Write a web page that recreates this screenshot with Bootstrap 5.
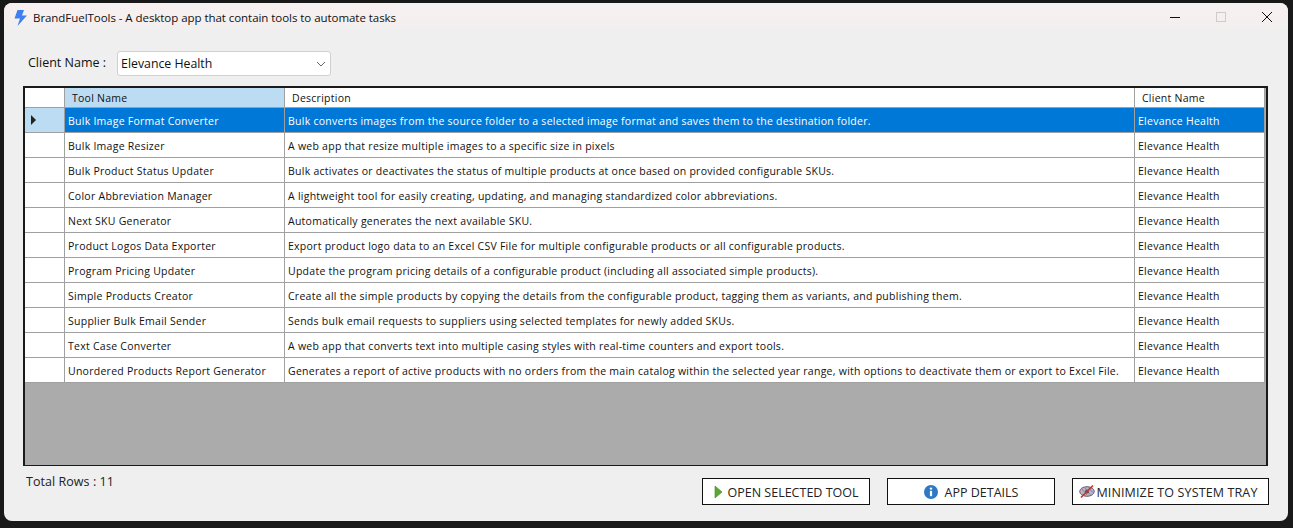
<!DOCTYPE html>
<html lang="en">
<head>
  <meta charset="UTF-8">
  <title>BrandFuelTools</title>
  <link rel="stylesheet" href="https://cdn.jsdelivr.net/npm/bootstrap@5.3.0/dist/css/bootstrap.min.css">
  <style>
    html, body { height: 100%; }
    body { background: #191919; font-family: "Open Sans", "Noto Sans", sans-serif; color: #111; overflow: hidden; padding: 3px 5px 7px 4px; }
    .app-window { height: 518px; background: #efefef; border-radius: 8px; overflow: hidden; }
    .title-bar { height: 30px; padding-left: 10px; font-size: 11.5px; letter-spacing: -.05px; background: linear-gradient(#f8f0f0, #f4efef 70%, #efefef); }
    .title-text { margin-left: 6px; }
    .win-btns { margin-left: auto; }
    .win-btn { width: 46px; height: 30px; padding: 0 0 2px 4px; }
    .top-form { height: 53px; padding: 8px 0 0 24px; font-size: 12.5px; }
    .client-select { width: 214px; height: 25px; margin-left: 11px; padding: 2px 3px 0; font-size: 12.3px; background: #fff; border: 1px solid #d0d0d0; border-radius: 3px; }
    .client-select svg { margin-left: auto; margin-right: 1px; margin-top: -2px; }
    .grid-box { height: 380px; margin: 0 20px 0 19px; border: 2px solid #1a1a1a; border-bottom-width: 1px; background: #ababab; overflow: hidden; }
    .tool-table { table-layout: fixed; width: 1240px; font-size: 10.5px; border-collapse: separate; border-spacing: 0; }
    .tool-table th, .tool-table td { padding: 0 3px; background: #fff; border-right: 1px solid #a0a0a0; border-bottom: 1px solid #a0a0a0; white-space: nowrap; overflow: hidden; font-weight: 400; letter-spacing: .26px; }
    .tool-table thead th { height: 20px; padding: 2px 0 0 7px; }
    .tool-table tbody td { height: 25px; padding-top: 4px; }
    .tool-table th.sorted-col { background: #bcdcf4; }
    .tool-table tbody td.row-head { padding: 0 0 0 5px; }
    .tool-table tr.picked td { background: #0078d7; color: #fff; }
    .tool-table tr.picked td.row-head { background: #bcdcf4; }
    .bottom-bar { padding: 8px 19px 0 22px; font-size: 12.5px; }
    .total-rows { margin-top: -1px; color: #222; letter-spacing: .05px; }
    .act-btn { height: 27px; background: #fff; border: 1px solid #111; border-radius: 0; font-size: 12.5px; color: #222; padding: 3px 0 0; gap: 5px; margin-top: 4px; }
    .act-btn svg { margin-top: -3px; }
    .act-open { width: 168px; }
    .act-details { width: 168px; margin-left: 17px; gap: 7px; }
    .act-tray { width: 197px; margin-left: 17px; gap: 1px; padding-right: 4px; letter-spacing: .13px; }
  </style>
</head>
<body>
  <div class="app-window d-flex flex-column">
    <div class="title-bar d-flex align-items-center">
      <svg width="13" height="16" viewBox="0 0 13 16"><path d="M3.500 0H10L8 5.500h5L3.500 16 6 8.500H0.500z" fill="#3f80ee"/></svg>
      <span class="title-text">BrandFuelTools - A desktop app that contain tools to automate tasks</span>
      <div class="win-btns d-flex">
        <div class="win-btn d-flex align-items-center justify-content-center"><svg width="12" height="12" viewBox="0 0 12 12"><path d="M1 6.500h10" stroke="#111" stroke-width="1"/></svg></div>
        <div class="win-btn d-flex align-items-center justify-content-center"><svg width="12" height="12" viewBox="0 0 12 12"><rect x="1.500" y="1.500" width="9" height="9" fill="none" stroke="#ccc"/></svg></div>
        <div class="win-btn d-flex align-items-center justify-content-center"><svg width="12" height="12" viewBox="0 0 12 12"><path d="M1 1l10 10M11 1 1 11" stroke="#111" stroke-width="1"/></svg></div>
      </div>
    </div>
    <div class="top-form d-flex align-items-center">
      <span>Client Name :</span>
      <div class="client-select d-flex align-items-center">
        <span>Elevance Health</span>
        <svg width="10" height="10" viewBox="0 0 10 10"><path d="M1 3 5 7 9 3" fill="none" stroke="#666"/></svg>
      </div>
    </div>
    <div class="grid-box">
      <table class="tool-table">
        <colgroup><col style="width:40px"><col style="width:220px"><col style="width:850px"><col style="width:130px"></colgroup>
        <thead>
          <tr><th></th><th class="sorted-col">Tool Name</th><th>Description</th><th>Client Name</th></tr>
        </thead>
        <tbody id="tool-rows"></tbody>
      </table>
    </div>
    <div class="bottom-bar d-flex align-items-start">
      <span class="total-rows">Total Rows : 11</span>
      <button class="act-btn act-open d-flex align-items-center justify-content-center ms-auto" type="button">
        <svg width="9" height="14" viewBox="0 0 9 14"><path d="M1 1v12l7-6z" fill="#5aa832" stroke="#3f8a24" stroke-width=".6"/></svg>
        OPEN SELECTED TOOL
      </button>
      <button class="act-btn act-details d-flex align-items-center justify-content-center" type="button">
        <svg width="14" height="14" viewBox="0 0 14 14"><circle cx="7" cy="7" r="7" fill="#2f78c4"/><circle cx="7" cy="3.600" r="1.200" fill="#fff"/><rect x="5.900" y="5.800" width="2.200" height="5.400" fill="#fff"/></svg>
        APP DETAILS
      </button>
      <button class="act-btn act-tray d-flex align-items-center justify-content-center" type="button">
        <svg width="16" height="15" viewBox="0 0 16 15"><ellipse cx="8" cy="7.500" rx="7.300" ry="4.800" fill="#b9b4c6" stroke="#6a5a70"/><path d="M3 5l5 6M6 4l5 6.500M9.500 3.500l4 5" stroke="#7d7288" stroke-width=".8"/><circle cx="8" cy="7.500" r="2" fill="#55506a"/><path d="M2 13.500 14 1.500" stroke="#c0392b" stroke-width="1.700"/></svg>
        MINIMIZE TO SYSTEM TRAY
      </button>
    </div>
  </div>
  <script>
    const tools = [
      ['Bulk Image Format Converter', 'Bulk converts images from the source folder to a selected image format and saves them to the destination folder.'],
      ['Bulk Image Resizer', 'A web app that resize multiple images to a specific size in pixels'],
      ['Bulk Product Status Updater', 'Bulk activates or deactivates the status of multiple products at once based on provided configurable SKUs.'],
      ['Color Abbreviation Manager', 'A lightweight tool for easily creating, updating, and managing standardized color abbreviations.'],
      ['Next SKU Generator', 'Automatically generates the next available SKU.'],
      ['Product Logos Data Exporter', 'Export product logo data to an Excel CSV File for multiple configurable products or all configurable products.'],
      ['Program Pricing Updater', 'Update the program pricing details of a configurable product (including all associated simple products).'],
      ['Simple Products Creator', 'Create all the simple products by copying the details from the configurable product, tagging them as variants, and publishing them.'],
      ['Supplier Bulk Email Sender', 'Sends bulk email requests to suppliers using selected templates for newly added SKUs.'],
      ['Text Case Converter', 'A web app that converts text into multiple casing styles with real-time counters and export tools.'],
      ['Unordered Products Report Generator', 'Generates a report of active products with no orders from the main catalog within the selected year range, with options to deactivate them or export to Excel File.']
    ];
    document.getElementById('tool-rows').innerHTML = tools.map((t, i) => `<tr class="${i === 0 ? 'picked' : ''}">
      <td class="row-head">${i === 0 ? '<svg width="7" height="10" viewBox="0 0 7 10"><path d="M1 0v10l5-5z" fill="#222"/></svg>' : ''}</td>
      <td>${t[0]}</td><td>${t[1]}</td><td>Elevance Health</td></tr>`).join('');
  </script>
  <script src="https://cdn.jsdelivr.net/npm/bootstrap@5.3.0/dist/js/bootstrap.bundle.min.js"></script>
</body>
</html>
